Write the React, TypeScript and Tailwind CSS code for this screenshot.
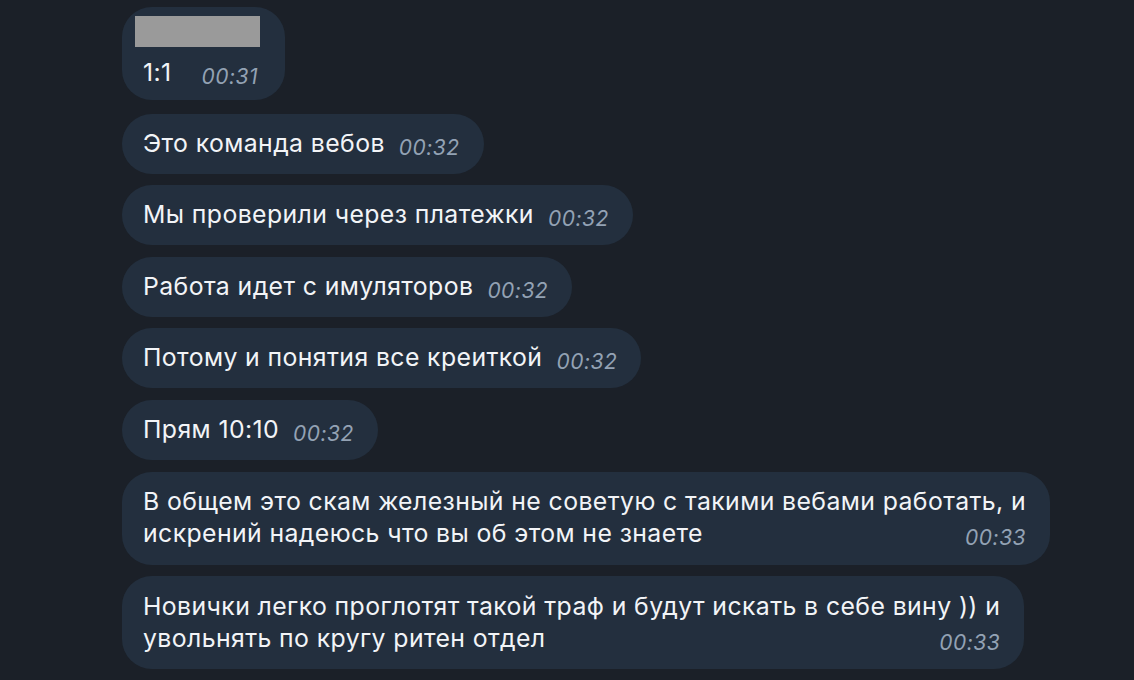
import React from 'react';

interface Message {
  lines: string[];
  time: string;
}

const messages: Message[] = [
  { lines: ['Это команда вебов'], time: '00:32' },
  { lines: ['Мы проверили через платежки'], time: '00:32' },
  { lines: ['Работа идет с имуляторов'], time: '00:32' },
  { lines: ['Потому и понятия все креиткой'], time: '00:32' },
  { lines: ['Прям 10:10'], time: '00:32' },
  {
    lines: [
      'В общем это скам железный не советую с такими вебами работать, и',
      'искрений надеюсь что вы об этом не знаете',
    ],
    time: '00:33',
  },
  {
    lines: [
      'Новички легко проглотят такой траф и будут искать в себе вину )) и',
      'увольнять по кругу ритен отдел',
    ],
    time: '00:33',
  },
];

const Time = ({ value, gap = 'ml-[14px]' }: { value: string; gap?: string }) => (
  <span
    className={`${gap} translate-y-[3px] text-[21px] leading-[32px] italic tracking-[0.5px] text-[#93a2b4] whitespace-nowrap`}
  >
    {value}
  </span>
);

const Bubble = ({ msg }: { msg: Message }) => {
  if (msg.lines.length === 1) {
    return (
      <div className="self-start h-[60px] flex items-center rounded-[30px] bg-[#232f3e] pl-[21px] pr-[24px]">
        <div className="flex items-baseline leading-[32px]">
          <span className="whitespace-nowrap">{msg.lines[0]}</span>
          <Time value={msg.time} />
        </div>
      </div>
    );
  }
  return (
    <div className="self-start h-[93px] flex flex-col justify-center rounded-[30px] bg-[#232f3e] pl-[21px] pr-[24px] pb-[2px] leading-[32px]">
      {msg.lines.slice(0, -1).map((line) => (
        <span key={line} className="h-[32px] whitespace-nowrap">
          {line}
        </span>
      ))}
      <div className="h-[32px] flex items-baseline">
        <span className="whitespace-nowrap">{msg.lines[msg.lines.length - 1]}</span>
        <span className="flex-1" />
        <Time value={msg.time} />
      </div>
    </div>
  );
};

export default function App() {
  return (
    <div
      className="w-[1134px] h-[680px] overflow-hidden bg-[#1b2028] text-[#f2f4f7] text-[24.8px] tracking-[0.4px]"
      style={{ fontFamily: 'Inter, "Noto Sans", sans-serif' }}
    >
      <div className="flex flex-col gap-[11.6px] pl-[122px] pt-[7px]">
        {/* first message: blurred photo + caption */}
        <div className="self-start h-[93px] mb-[2px] flex flex-col rounded-[30px] bg-[#232f3e] pl-[13px] pr-[25px] pt-[9px]">
          <div className="w-[125px] h-[31px] bg-[#9a9a9a]" />
          <div className="flex items-baseline pl-[8px] mt-[9px] leading-[32px]">
            <span>1:1</span>
            <Time value="00:31" gap="ml-[30px]" />
          </div>
        </div>
        {messages.map((m, i) => (
          <Bubble key={i} msg={m} />
        ))}
      </div>
    </div>
  );
}
